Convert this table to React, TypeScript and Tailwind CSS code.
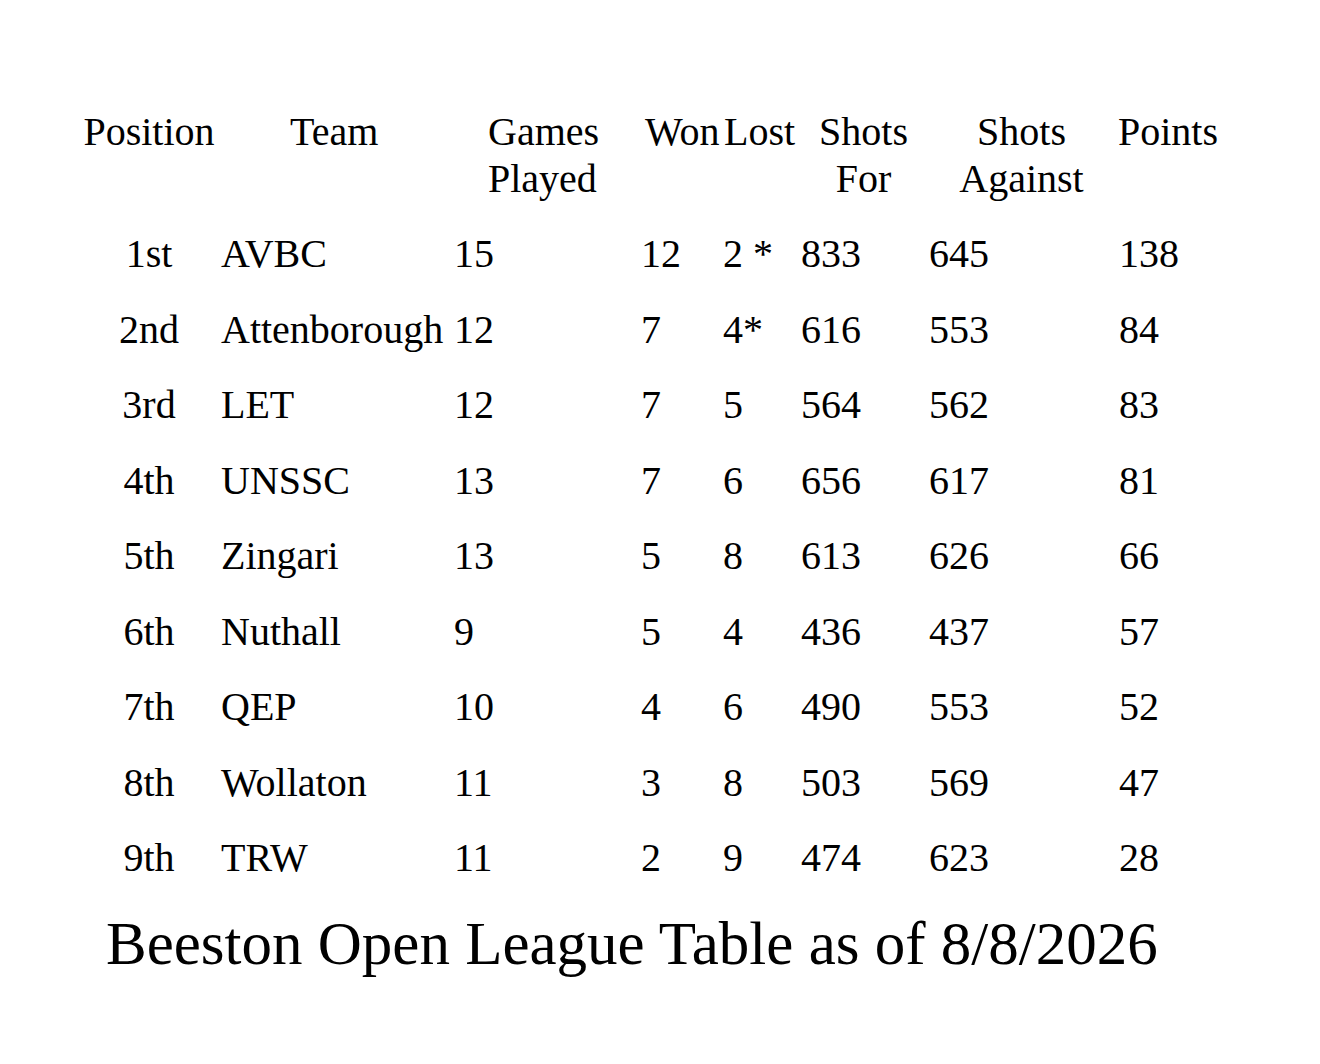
const rows = [
  ["1st", "AVBC", "15", "12", "2 *", "833", "645", "138"],
  ["2nd", "Attenborough", "12", "7", "4*", "616", "553", "84"],
  ["3rd", "LET", "12", "7", "5", "564", "562", "83"],
  ["4th", "UNSSC", "13", "7", "6", "656", "617", "81"],
  ["5th", "Zingari", "13", "5", "8", "613", "626", "66"],
  ["6th", "Nuthall", "9", "5", "4", "436", "437", "57"],
  ["7th", "QEP", "10", "4", "6", "490", "553", "52"],
  ["8th", "Wollaton", "11", "3", "8", "503", "569", "47"],
  ["9th", "TRW", "11", "2", "9", "474", "623", "28"],
];

export default function App() {
  return (
    <div className="w-[1320px] h-[1064px] bg-white text-black pt-[108px] pl-[83px] font-['Liberation_Serif','Times_New_Roman',serif]">
      {/* Header */}
      <div className="grid grid-cols-[138px_231px_189px_82px_78px_128px_188px_150px] text-[40px] leading-[47px]">
        <div className="text-center pr-[6px]">Position</div>
        <div className="pl-[69px]">Team</div>
        <div className="pl-[36px]">
          Games
          <br />
          Played
        </div>
        <div className="pl-[4px]">Won</div>
        <div className="pl-[1px]">Lost</div>
        <div className="text-center pr-[3px]">
          Shots
          <br />
          For
        </div>
        <div className="text-center pr-[3px]">
          Shots
          <br />
          Against
        </div>
        <div className="pl-[1px]">Points</div>
      </div>

      {/* Rows */}
      <div className="mt-[14px]">
        {rows.map((r) => (
          <div
            key={r[0]}
            className="grid grid-cols-[138px_231px_189px_82px_78px_128px_188px_150px] text-[40px] leading-[75.5px] whitespace-nowrap"
          >
            <div className="text-center pr-[6px]">{r[0]}</div>
            <div>{r[1]}</div>
            <div className="pl-[2px]">{r[2]}</div>
            <div>{r[3]}</div>
            <div>{r[4]}</div>
            <div>{r[5]}</div>
            <div>{r[6]}</div>
            <div className="pl-[2px]">{r[7]}</div>
          </div>
        ))}
      </div>

      <div className="mt-[13px] pl-[23px] text-[61px] leading-[70px]">
        Beeston Open League Table as of 8/8/2026
      </div>
    </div>
  );
}
